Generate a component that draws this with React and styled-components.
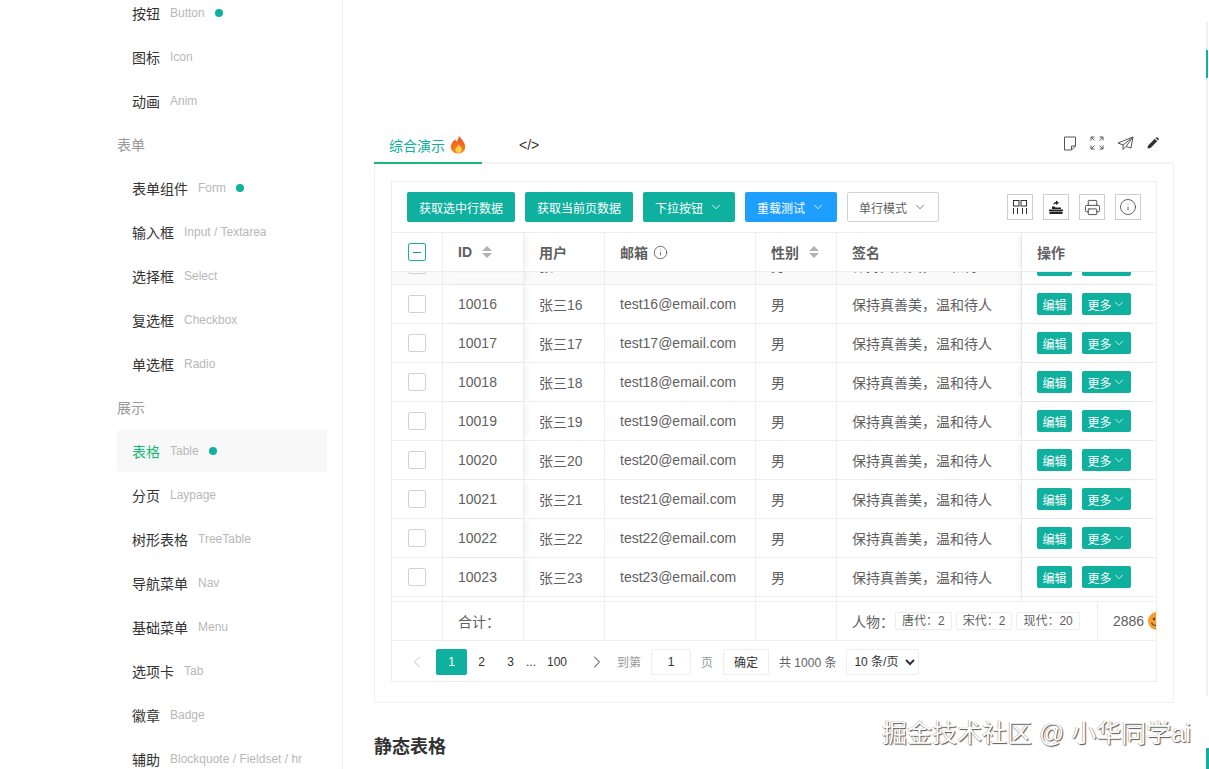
import styled, { createGlobalStyle } from 'styled-components';
import { ChevronDown, ChevronLeft, ChevronRight, Info, Printer } from 'lucide-react';

const TEAL = '#0fb09e';
const LINE = '#eeeeee';
const COLS = '51px 81px 81px 151px 81px 185px 1fr';
const FOOT_COLS = '51px 81px 81px 151px 81px 261px 1fr';

const GlobalStyle = createGlobalStyle`
  html, body {
    margin: 0;
    height: 100%;
    overflow: hidden;
    background: #fff;
    font-family: "Liberation Sans", "Noto Sans CJK SC", sans-serif;
    color: #5f5f5f;
  }
  * { box-sizing: border-box; }
`;

const menu = [
  { items: [['按钮', 'Button', true], ['图标', 'Icon'], ['动画', 'Anim']] },
  {
    title: '表单',
    items: [['表单组件', 'Form', true], ['输入框', 'Input / Textarea'], ['选择框', 'Select'], ['复选框', 'Checkbox'], ['单选框', 'Radio']],
  },
  {
    title: '展示',
    items: [
      ['表格', 'Table', true, true],
      ['分页', 'Laypage'],
      ['树形表格', 'TreeTable'],
      ['导航菜单', 'Nav'],
      ['基础菜单', 'Menu'],
      ['选项卡', 'Tab'],
      ['徽章', 'Badge'],
      ['辅助', 'Blockquote / Fieldset / hr'],
    ],
  },
];

const rows = [15, 16, 17, 18, 19, 20, 21, 22, 23];

const Flame = () => (
  <svg width="18" height="19" viewBox="0 0 18 19">
    <defs>
      <linearGradient id="fl" x1="0" y1="0" x2="0" y2="1">
        <stop offset="0" stopColor="#e8501f" />
        <stop offset="1" stopColor="#f98a1e" />
      </linearGradient>
    </defs>
    <path d="M9.6 0.5c.6 3-1 4.6-2.4 6.2-.5-.8-.7-1.5-.7-2.4C4 6 1.8 8.600 1.800 11.800 1.800 15.800 5 18.500 9 18.500s7.200-2.700 7.200-6.600c0-4.800-3.800-7.400-6.600-11.400z" fill="url(#fl)" />
    <path d="M9.300 9.200c.2 2-1.800 2.800-2.700 4.400-.8 1.600.4 4.300 2.600 4.300 2.300 0 3.800-1.700 3.600-3.800-.2-2-2.300-3-3.500-4.900z" fill="#fbd24a" />
  </svg>
);

const Smiley = () => (
  <svg width="18" height="18" viewBox="0 0 18 18">
    <circle cx="9" cy="9" r="9" fill="#f3a02e" />
    <circle cx="6" cy="7" r="1.300" fill="#6b3b12" />
    <path d="M3.500 11c1.500 3 6 3.500 8 .5" stroke="#6b3b12" strokeWidth="1.200" fill="none" />
  </svg>
);

const NoteIcon = () => (
  <svg width="14" height="15" viewBox="0 0 14 15" fill="none" stroke="#555" strokeWidth="1">
    <path d="M1.500 1h11v9l-4 4h-7z" />
    <path d="M12.500 10h-4v4" />
  </svg>
);

const ExpandIcon = () => (
  <svg width="14" height="14" viewBox="0 0 14 14" fill="none" stroke="#555" strokeWidth="1">
    <path d="M1 4.500V1h3.500M1 1l3.500 3.500M9.500 1H13v3.500M13 1L9.500 4.500M1 9.500V13h3.500M1 13l3.500-3.500M13 9.500V13H9.500M13 13L9.500 9.500" />
  </svg>
);

const PlaneIcon = () => (
  <svg width="17" height="15" viewBox="0 0 17 15" fill="none" stroke="#555" strokeWidth="1" strokeLinejoin="round">
    <path d="M16 1L1 7l5 2 10-8-7 9.500 5 1.500zM6 9v4.500L9 10.500" />
  </svg>
);

const PenIcon = () => (
  <svg width="12" height="12" viewBox="0 0 12 12" fill="#333">
    <path d="M0.500 11.500l.6-3L7.800 1.800l2.400 2.400-6.700 6.700zM8.600 1l.7-.6c.4-.3.900-.3 1.200 0l1.100 1.100c.3.300.3.800 0 1.200l-.6.700z" />
  </svg>
);

const ColsIcon = () => (
  <svg width="16" height="16" viewBox="0 0 16 16" fill="none" stroke="#333" strokeWidth="1">
    <rect x="1.500" y="1.500" width="5.500" height="5.500" />
    <rect x="9" y="1.500" width="5.500" height="5.500" />
    <path d="M1.500 9v6M5.500 9v6M10.500 9v6M14.500 9v6" />
  </svg>
);

const ExportIcon = () => (
  <svg width="16" height="16" viewBox="0 0 16 16" fill="#222">
    <path d="M1 10.500h14v1.500H1zM1.500 12.500h13V15h-13z" />
    <path d="M4 10V7.500h2.500l1 1H13V10z" />
    <path d="M8 1.500l3 2.300-3 2.300V4.800c-1.400 0-2.200.5-2.800 1.500.2-2 1.200-3.200 2.800-3.300z" />
  </svg>
);

const App = () => {
  return (
    <Page>
      <GlobalStyle />
      <Sidebar>
        {menu.map((group, g) => (
          <div key={g}>
            {group.title && <GroupTitle>{group.title}</GroupTitle>}
            {group.items.map(([name, sub, dot, active]) => (
              <MenuItem key={name} $active={active}>
                <MenuName $active={active}>{name}</MenuName>
                <MenuSub>{sub}</MenuSub>
                {dot && <Dot />}
              </MenuItem>
            ))}
          </div>
        ))}
      </Sidebar>

      <Main>
        <Tabs>
          <Tab $active>
            综合演示 <Flame />
          </Tab>
          <Tab>&lt;/&gt;</Tab>
          <TabTools>
            <NoteIcon />
            <ExpandIcon />
            <PlaneIcon />
            <PenIcon />
          </TabTools>
        </Tabs>

        <TabBody>
          <Table>
            <Toolbar>
              <Btn>获取选中行数据</Btn>
              <Btn>获取当前页数据</Btn>
              <Btn>
                下拉按钮 <ChevronDown size={14} strokeWidth={1.4} />
              </Btn>
              <Btn $color="#1e9fff">
                重载测试 <ChevronDown size={14} strokeWidth={1.4} />
              </Btn>
              <Btn $outline>
                单行模式 <ChevronDown size={14} strokeWidth={1.4} />
              </Btn>
              <ToolIcons>
                <ToolIcon><ColsIcon /></ToolIcon>
                <ToolIcon><ExportIcon /></ToolIcon>
                <ToolIcon><Printer size={17} strokeWidth={1.3} color="#444" /></ToolIcon>
                <ToolIcon><Info size={18} strokeWidth={1.1} color="#444" /></ToolIcon>
              </ToolIcons>
            </Toolbar>

            <HeadRow>
              <Cell $center>
                <Check $on />
              </Cell>
              <HeadCell $shadow="left">
                ID <Sort />
              </HeadCell>
              <HeadCell>用户</HeadCell>
              <HeadCell>
                邮箱 <Info size={15} strokeWidth={1.3} color="#555" />
              </HeadCell>
              <HeadCell>
                性别 <Sort />
              </HeadCell>
              <HeadCell>签名</HeadCell>
              <HeadCell $shadow="right" $last>操作</HeadCell>
            </HeadRow>

            <TableBody>
              <ScrollInner>
                {rows.map((n) => (
                  <Row key={n} $muted={n === 15}>
                    <Cell $center>
                      <Check />
                    </Cell>
                    <Cell $shadow="left">100{n}</Cell>
                    <Cell>张三{n}</Cell>
                    <Cell>test{n}@email.com</Cell>
                    <Cell>男</Cell>
                    <Cell>保持真善美，温和待人</Cell>
                    <Cell $shadow="right" $last>
                      <ActionBtn>编辑</ActionBtn>
                      <ActionBtn $more>
                        更多<ChevronDown size={14} strokeWidth={1.3} />
                      </ActionBtn>
                    </Cell>
                  </Row>
                ))}
                <FillerRow>
                  <Cell />
                  <Cell $shadow="left" />
                  <Cell />
                  <Cell />
                  <Cell />
                  <Cell />
                  <Cell $shadow="right" $last />
                </FillerRow>
              </ScrollInner>
            </TableBody>

            <FootRow>
              <Cell />
              <Cell>合计：</Cell>
              <Cell />
              <Cell />
              <Cell />
              <Cell>
                人物：
                <Tags>
                  <Tag>唐代：2</Tag>
                  <Tag>宋代：2</Tag>
                  <Tag>现代：20</Tag>
                </Tags>
              </Cell>
              <Cell $last>
                2886 <EmojiWrap><Smiley /></EmojiWrap>
              </Cell>
            </FootRow>

            <Pager>
              <PageLink $w={30} $muted><ChevronLeft size={20} strokeWidth={1.2} /></PageLink>
              <PageLink $w={31} $current>1</PageLink>
              <PageLink $w={29}>2</PageLink>
              <PageLink $w={29}>3</PageLink>
              <PageLink $w={12}>...</PageLink>
              <PageLink $w={40}>100</PageLink>
              <PageLink $w={40}><ChevronRight size={20} strokeWidth={1.2} /></PageLink>
              <PagerText $muted>到第</PagerText>
              <PageInput defaultValue="1" />
              <PagerText $muted>页</PagerText>
              <ConfirmBtn>确定</ConfirmBtn>
              <PagerText>共 1000 条</PagerText>
              <PageSelect defaultValue="10">
                <option value="10">10 条/页</option>
                <option value="20">20 条/页</option>
              </PageSelect>
            </Pager>
          </Table>
        </TabBody>

        <SectionTitle>静态表格</SectionTitle>
      </Main>

      <Rail>
        <RailPiece $h={28} />
        <RailPiece $h={28} $color={TEAL} />
        <RailPiece $h={618} />
        <RailGap />
        <RailPiece $h={21} $color={TEAL} $wide />
      </Rail>

      <Watermark>掘金技术社区 @ 小华同学ai</Watermark>
    </Page>
  );
};

const Page = styled.div`
  position: relative;
  display: flex;
  height: 769px;
  overflow: hidden;
`;

const Sidebar = styled.aside`
  width: 343px;
  flex: none;
  margin-top: -8px;
  padding: 0 15px 0 117px;
  border-right: 1px solid #f0f0f0;
`;

const GroupTitle = styled.div`
  height: 43px;
  line-height: 43px;
  font-size: 14px;
  color: #999;
`;

const MenuItem = styled.div`
  display: flex;
  align-items: center;
  height: 42px;
  margin-bottom: 2px;
  padding-left: 15px;
  border-radius: 2px;
  background: ${(p) => (p.$active ? '#f8f8f8' : 'transparent')};
`;

const MenuName = styled.span`
  font-size: 14px;
  color: ${(p) => (p.$active ? '#16b777' : '#333')};
`;

const MenuSub = styled.span`
  margin-left: 10px;
  font-size: 12px;
  color: #b8b8b8;
`;

const Dot = styled.i`
  width: 8px;
  height: 8px;
  margin-left: 10px;
  border-radius: 50%;
  background: ${TEAL};
`;

const Main = styled.main`
  flex: 1;
  padding: 127px 32px 0 31px;
`;

const Tabs = styled.div`
  display: flex;
  height: 37px;
  border-bottom: 2px solid #f3f3f3;
`;

const Tab = styled.div`
  display: flex;
  align-items: center;
  gap: 4px;
  height: 37px;
  padding: 0 ${(p) => (p.$active ? '15px' : '37px')};
  font-size: 14px;
  color: ${(p) => (p.$active ? TEAL : '#333')};
  border-bottom: 2px solid ${(p) => (p.$active ? '#16b777' : 'transparent')};
`;

const TabTools = styled.div`
  display: flex;
  align-items: center;
  gap: 13px;
  height: 32px;
  margin-left: auto;
  padding-right: 15px;
`;

const TabBody = styled.div`
  padding: 17px 16px 20px;
  border: 1px solid #f0f0f0;
  border-top: none;
`;

const Table = styled.div`
  border: 1px solid ${LINE};
`;

const Toolbar = styled.div`
  display: flex;
  align-items: center;
  gap: 10px;
  height: 51px;
  padding: 0 15px;
  border-bottom: 1px solid ${LINE};
`;

const Btn = styled.button`
  display: flex;
  align-items: center;
  justify-content: center;
  gap: 6px;
  height: 30px;
  padding: 0 11px;
  border: 1px solid ${(p) => (p.$outline ? '#d2d2d2' : 'transparent')};
  border-radius: 2px;
  font: inherit;
  font-size: 12px;
  color: ${(p) => (p.$outline ? '#5f5f5f' : '#fff')};
  background: ${(p) => (p.$outline ? '#fff' : p.$color || TEAL)};
`;

const ToolIcons = styled.div`
  display: flex;
  gap: 10px;
  margin-left: auto;
`;

const ToolIcon = styled.div`
  display: flex;
  align-items: center;
  justify-content: center;
  width: 26px;
  height: 26px;
  border: 1px solid #ccc;
`;

const Row = styled.div`
  display: grid;
  grid-template-columns: ${COLS};
  height: 39px;
  border-bottom: 1px solid ${LINE};
  background: ${(p) => (p.$muted ? '#fafafa' : 'transparent')};
`;

const HeadRow = styled(Row)``;

const FillerRow = styled(Row)`
  height: 4px;
  border-bottom: none;
`;

const FootRow = styled(Row)`
  grid-template-columns: ${FOOT_COLS};
  height: 40px;
  border-top: 1px solid ${LINE};
  overflow: hidden;
`;

const shadows = {
  left: '4px 0 6px -2px rgba(0, 0, 0, 0.07)',
  right: '-4px 0 6px -2px rgba(0, 0, 0, 0.07)',
};

const Cell = styled.div`
  position: relative;
  display: flex;
  align-items: center;
  justify-content: ${(p) => (p.$center ? 'center' : 'flex-start')};
  min-width: 0;
  padding: 0 ${(p) => (p.$center ? '0' : '15px')};
  border-right: ${(p) => (p.$last ? 'none' : `1px solid ${LINE}`)};
  font-size: 14px;
  white-space: nowrap;
  color: #5f5f5f;
  box-shadow: ${(p) => (p.$shadow ? shadows[p.$shadow] : 'none')};
  z-index: ${(p) => (p.$shadow ? 1 : 0)};
  background: ${(p) => (p.$shadow === 'right' ? '#fff' : 'transparent')};
`;

const HeadCell = styled(Cell)`
  gap: 5px;
  font-weight: 600;
  background: #fff;
`;

const Check = styled.span`
  display: flex;
  align-items: center;
  justify-content: center;
  width: 18px;
  height: 18px;
  border: 1px solid ${(p) => (p.$on ? '#16b3a0' : '#d2d2d2')};
  border-radius: 2px;
  &::after {
    content: '';
    display: ${(p) => (p.$on ? 'block' : 'none')};
    width: 8px;
    height: 1px;
    background: #16977f;
  }
`;

const Sort = styled.span`
  display: inline-flex;
  flex-direction: column;
  gap: 2px;
  margin-left: 5px;
  &::before,
  &::after {
    content: '';
    width: 0;
    height: 0;
    border-left: 5px solid transparent;
    border-right: 5px solid transparent;
  }
  &::before {
    border-bottom: 5px solid #b2b2b2;
  }
  &::after {
    border-top: 5px solid #b2b2b2;
  }
`;

const TableBody = styled.div`
  height: 329px;
  overflow: hidden;
`;

const ScrollInner = styled.div`
  margin-top: -26px;
`;

const ActionBtn = styled.span`
  display: flex;
  align-items: center;
  justify-content: center;
  width: ${(p) => (p.$more ? '50px' : '36px')};
  height: 22px;
  margin-right: 10px;
  border-radius: 2px;
  font-size: 12px;
  color: #fff;
  background: ${TEAL};
`;

const Tags = styled.span`
  display: flex;
  gap: 4px;
  margin-left: 1px;
`;

const Tag = styled.span`
  height: 18px;
  padding: 0 6px;
  line-height: 17px;
  border: 1px solid ${LINE};
  border-radius: 2px;
  font-size: 12px;
`;

const EmojiWrap = styled.span`
  display: flex;
  margin-left: 4px;
`;

const Pager = styled.div`
  display: flex;
  align-items: center;
  height: 40px;
  padding: 1px 0 0 10px;
  font-size: 12px;
`;

const PageLink = styled.span`
  display: flex;
  align-items: center;
  justify-content: center;
  flex: none;
  width: ${(p) => p.$w}px;
  height: 26px;
  margin-right: ${(p) => (p.$muted ? '4px' : '0')};
  border-radius: 2px;
  color: ${(p) => (p.$current ? '#fff' : p.$muted ? '#c2c2c2' : '#333')};
  background: ${(p) => (p.$current ? TEAL : 'transparent')};
`;

const PagerText = styled.span`
  margin-right: 10px;
  color: ${(p) => (p.$muted ? '#999' : '#5f5f5f')};
`;

const PageInput = styled.input`
  width: 40px;
  height: 26px;
  margin-right: 10px;
  border: 1px solid ${LINE};
  border-radius: 2px;
  font: inherit;
  text-align: center;
  color: #333;
`;

const ConfirmBtn = styled.button`
  width: 46px;
  height: 26px;
  margin-right: 10px;
  padding: 0;
  border: 1px solid ${LINE};
  border-radius: 2px;
  font: inherit;
  color: #333;
  background: #fff;
`;

const PageSelect = styled.select`
  width: 73px;
  height: 26px;
  padding: 0 3px;
  border: 1px solid ${LINE};
  border-radius: 2px;
  font: inherit;
  color: #333;
  background: #fff;
`;

const SectionTitle = styled.h2`
  margin: 32px 0 0;
  font-size: 18px;
  font-weight: 600;
  line-height: 24px;
  color: #333;
`;

const Rail = styled.div`
  flex: none;
  display: flex;
  flex-direction: column;
  align-items: flex-start;
  width: 3px;
  padding-top: 22px;
`;

const RailPiece = styled.i`
  flex: none;
  width: ${(p) => (p.$wide ? '3px' : '2px')};
  height: ${(p) => p.$h}px;
  background: ${(p) => p.$color || '#efefef'};
`;

const RailGap = styled.i`
  flex: 1;
`;

const Watermark = styled.div`
  position: absolute;
  left: 882px;
  top: 716px;
  font-size: 25px;
  line-height: 34px;
  white-space: nowrap;
  color: #fff;
  text-shadow: 1px 1px 1px #555, -0.5px 0 0.5px #999;
`;

export default App;
